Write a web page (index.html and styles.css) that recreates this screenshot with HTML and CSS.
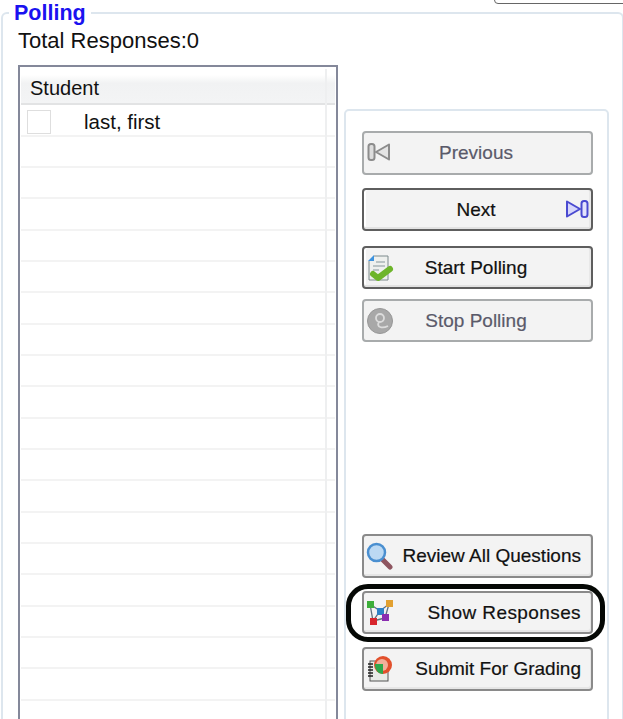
FILE: index.html
```html
<!DOCTYPE html>
<html>
    <head>
        <title>Polling</title>
        <link rel="stylesheet" href="styles.css">
    </head>
    <body>
        <div class="corner"></div>
        <fieldset class="polling">
            <legend>Polling</legend>
            <div class="total">Total Responses:0</div>
            <div class="columns">
                <div class="list">
                    <div class="list-head"><span>Student</span></div>
                    <div class="row first">
                        <span class="check"></span>
                        <span class="name">last, first</span>
                    </div>
                    <div class="row"></div><div class="row"></div><div class="row"></div>
                    <div class="row"></div><div class="row"></div><div class="row"></div>
                    <div class="row"></div><div class="row"></div><div class="row"></div>
                    <div class="row"></div><div class="row"></div><div class="row"></div>
                    <div class="row"></div><div class="row"></div><div class="row"></div>
                    <div class="row"></div><div class="row"></div><div class="row"></div>
                    <div class="col-line"></div>
                </div>
                <div class="panel">
                    <div class="group nav">
                        <button class="btn off">
                            <svg class="icon-left" width="24" height="20" viewBox="0 0 24 20"><rect x="1.5" y="2" width="6" height="16" rx="2.5" fill="#ddd" stroke="#8c8c8c" stroke-width="2"/><path d="M22 2.5 L9 10 L22 17.5 Z" fill="#e4e4e4" stroke="#8c8c8c" stroke-width="2" stroke-linejoin="round"/></svg>
                            <span>Previous</span>
                        </button>
                        <button class="btn main">
                            <span>Next</span>
                            <svg class="icon-right" width="24" height="20" viewBox="0 0 24 20"><path d="M2 2.5 L15 10 L2 17.5 Z" fill="#d6d6fb" stroke="#4a4ad0" stroke-width="2" stroke-linejoin="round"/><rect x="16.5" y="2" width="6" height="16" rx="2.5" fill="#e4e4fc" stroke="#4a4ad0" stroke-width="2"/></svg>
                        </button>
                    </div>
                    <div class="group poll">
                        <button class="btn main">
                            <svg class="icon" width="28" height="30" viewBox="0 0 28 30"><path d="M8 2 H22 V26 H3 V7 Z" fill="#eef0ee" stroke="#7d8a8c"/><path d="M2 7 L8 1 V7 Z" fill="#3d93df"/><path d="M10 8 H19 M7 12 H19 M7 16 H13" stroke="#a9b4b6" stroke-width="1.5"/><path d="M7 20 L12 24 L24 15" fill="none" stroke="#6db52a" stroke-width="6" stroke-linecap="round" stroke-linejoin="round"/></svg>
                            <span>Start Polling</span>
                        </button>
                        <button class="btn off">
                            <svg class="icon" width="28" height="28" viewBox="0 0 28 28"><circle cx="14" cy="14" r="12.5" fill="#a8a8a8" stroke="#979797"/><circle cx="14" cy="11" r="4" fill="none" stroke="#dcdcdc" stroke-width="1.8"/><path d="M13 15 C10 20 16 22 22 19" fill="none" stroke="#dcdcdc" stroke-width="1.8"/></svg>
                            <span>Stop Polling</span>
                        </button>
                    </div>
                    <div class="group tools">
                        <button class="btn">
                            <svg class="icon" width="28" height="28" viewBox="0 0 28 28"><path d="M15 16 L24 25" stroke="#8e5560" stroke-width="5" stroke-linecap="round"/><circle cx="10.5" cy="10.5" r="8.5" fill="#bcd9f3" stroke="#4a8fd0" stroke-width="2.5"/></svg>
                            <span class="text-right">Review All Questions</span>
                        </button>
                        <button class="btn">
                            <svg class="icon" width="28" height="28" viewBox="0 0 28 28"><path d="M4 5 L14 12 L23 5 M4 5 L7 22 L14 12 L19 19 L7 22 M14 12 L19 19 L23 5" fill="none" stroke="#5f7180" stroke-width="1.3"/><rect x="1" y="2" width="7" height="7" fill="#3dae3a"/><rect x="20" y="1" width="7" height="7" fill="#e2a030"/><rect x="11" y="9" width="7" height="7" fill="#2f82c8"/><rect x="16" y="15" width="7" height="7" fill="#8a2eb0"/><rect x="4" y="19" width="7" height="7" fill="#d8262e"/></svg>
                            <span class="text-right wide">Show Responses</span>
                        </button>
                        <button class="btn">
                            <svg class="icon" width="28" height="28" viewBox="0 0 28 28"><rect x="4" y="6" width="18" height="20" fill="#e8ece8" stroke="#555"/><path d="M2 9 H7 M2 12 H7 M2 15 H7 M2 18 H7 M2 21 H7" stroke="#222" stroke-width="1.5"/><circle cx="17" cy="10" r="9" fill="#e2502c"/><circle cx="16" cy="10" r="6" fill="#f2b09a"/><path d="M9 9 H17 V19 C12 19 9 15 9 9 Z" fill="#2fa84a"/></svg>
                            <span class="text-right">Submit For Grading</span>
                        </button>
                    </div>
                    <div class="mark"></div>
                </div>
            </div>
        </fieldset>
    </body>
</html>
```

FILE: styles.css
```css
html, body {
    margin: 0;
    padding: 0;
    height: 719px;
    overflow: hidden;
    background: #fff;
}

body {
    font-family: "Liberation Sans", Arial, sans-serif;
    color: #111;
    position: relative;
}

.corner {
    position: absolute;
    top: -6px;
    left: 494px;
    width: 140px;
    height: 8px;
    border: 1.5px solid #666;
    border-radius: 4px;
}

.polling {
    margin: 0 2px 0 1px;
    padding: 0 13px 0 15px;
    height: 745px;
    border: 2px solid #dde6ee;
    border-bottom: none;
    border-radius: 6px 6px 0 0;
    box-sizing: border-box;
}

.polling legend {
    margin-left: -9px;
    padding: 0 5px;
    font-size: 21.5px;
    font-weight: bold;
    line-height: 26px;
    color: #1a12f0;
}

.total {
    font-size: 22px;
    line-height: 24px;
    margin-top: 3px;
}

.columns {
    display: flex;
    align-items: stretch;
    gap: 6px;
    margin-top: 12px;
    height: 660px;
}

.list {
    position: relative;
    width: 316px;
    flex: none;
    padding-top: 3px;
    border: 2px solid #84889a;
    border-bottom: none;
    overflow: hidden;
}

.list-head {
    height: 35px;
    margin: 0 1px;
    padding-left: 9px;
    font-size: 20px;
    line-height: 36px;
    background: linear-gradient(#fff 0, #fff 15%, #f1f2f3 40%, #f3f4f5 100%);
    border-bottom: 2px solid #e2e3e4;
    box-sizing: border-box;
}

.row {
    height: 31.35px;
    margin: 0 1px;
    border-bottom: 2px solid #f3f3f3;
    box-sizing: border-box;
    display: flex;
    align-items: center;
}

.row.first {
    height: 31.5px;
    padding-top: 4px;
}

.check {
    width: 22px;
    height: 22px;
    margin-left: 6px;
    border: 1.5px solid #dedede;
}

.name {
    margin-left: 33px;
    font-size: 20.5px;
    position: relative;
    top: 0;
}

.col-line {
    position: absolute;
    top: 2px;
    bottom: 0;
    left: 305px;
    width: 2px;
    background: #eeeff0;
}

.panel {
    position: relative;
    flex: 1;
    margin-top: 44px;
    padding: 20px 14px 0 16px;
    border: 2px solid #dde6ee;
    border-radius: 5px;
    display: flex;
    flex-direction: column;
}

.group {
    display: flex;
    flex-direction: column;
}

.nav { gap: 13px; }

.poll {
    gap: 9.5px;
    margin-top: 14.5px;
}

.tools {
    gap: 13px;
    margin-top: 192px;
}

.btn {
    position: relative;
    display: block;
    width: 231px;
    height: 43.5px;
    padding: 1px 3px 0 0;
    font-family: inherit;
    font-size: 19px;
    -webkit-text-stroke: 0.2px;
    color: #111;
    text-align: center;
    background: #f3f3f3;
    border: 2px solid #8a8a8a;
    border-radius: 4px;
    box-shadow: inset -1px -2px 0 #e6e6e6;
}

.btn.off {
    color: #5a5a6a;
    border-color: #a8abac;
    box-shadow: none;
}

.btn.main {
    border-color: #5e5e5e;
    box-shadow: inset 0 -2px 0 #e2e2e2, inset -2px 0 0 #e8e8e8, inset 2px 0 0 #fff;
}

.btn .text-right {
    position: absolute;
    right: 10px;
    top: 9px;
    line-height: 21px;
    white-space: nowrap;
}

.btn .wide {
    letter-spacing: 0.4px;
}

.btn svg {
    position: absolute;
    top: 6px;
    left: 2px;
}

.btn .icon-left {
    top: 9px;
    left: 3px;
}

.btn .icon-right {
    top: 9px;
    left: auto;
    right: 2px;
}

.mark {
    position: absolute;
    left: 0;
    top: 473px;
    width: 249px;
    height: 48px;
    border: 5px solid #050805;
    border-radius: 22px;
}
```
